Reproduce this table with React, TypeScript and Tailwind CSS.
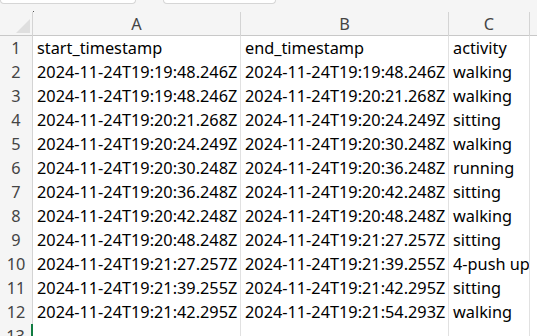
const rows: [string, string, string][] = [
  ['start_timestamp', 'end_timestamp', 'activity'],
  ['2024-11-24T19:19:48.246Z', '2024-11-24T19:19:48.246Z', 'walking'],
  ['2024-11-24T19:19:48.246Z', '2024-11-24T19:20:21.268Z', 'walking'],
  ['2024-11-24T19:20:21.268Z', '2024-11-24T19:20:24.249Z', 'sitting'],
  ['2024-11-24T19:20:24.249Z', '2024-11-24T19:20:30.248Z', 'walking'],
  ['2024-11-24T19:20:30.248Z', '2024-11-24T19:20:36.248Z', 'running'],
  ['2024-11-24T19:20:36.248Z', '2024-11-24T19:20:42.248Z', 'sitting'],
  ['2024-11-24T19:20:42.248Z', '2024-11-24T19:20:48.248Z', 'walking'],
  ['2024-11-24T19:20:48.248Z', '2024-11-24T19:21:27.257Z', 'sitting'],
  ['2024-11-24T19:21:27.257Z', '2024-11-24T19:21:39.255Z', '4-push up'],
  ['2024-11-24T19:21:39.255Z', '2024-11-24T19:21:42.295Z', 'sitting'],
  ['2024-11-24T19:21:42.295Z', '2024-11-24T19:21:54.293Z', 'walking'],
]

const cols = 'grid grid-cols-[33px_208px_208px_81px_1fr]'

export default function App() {
  return (
    <div className="w-[537px] h-[336px] overflow-hidden bg-[#f5f5f5] font-['Noto_Sans',sans-serif] text-black">
      {/* toolbar remnants */}
      <div className="h-[12px] flex items-start gap-[27px] relative">
        <div className="w-[136px] h-[4px] bg-white border-x border-b border-[#d6d6d6] rounded-b-[4px]" />
        <div className="w-[113px] h-[4px] bg-white border-x border-b border-[#d6d6d6] rounded-b-[4px]" />
        <div className="absolute left-[33px] top-[11px] w-px h-px bg-[#555]" />
      </div>

      {/* column header */}
      <div className={`${cols} h-[24px] bg-[#f5f5f5] border-b border-[#c8c8c8] text-[#444] text-[16.3px]`}>
        <div className="relative border-r border-[#d4d4d4]">
          <svg className="absolute left-[16px] top-[7px]" width="14" height="14" viewBox="0 0 14 14">
            <polygon points="14,0 14,14 0,14" fill="#dfdfdf" />
          </svg>
        </div>
        <div className="flex items-center justify-center border-r border-[#d4d4d4]">A</div>
        <div className="flex items-center justify-center border-r border-[#d4d4d4]">B</div>
        <div className="flex items-center justify-center border-r border-[#d4d4d4]">C</div>
        <div />
      </div>

      {rows.map((r, i) => (
        <div key={i} className={`${cols} h-[24px] text-[16.3px] leading-[23px]`}>
          <div className="bg-[#f5f5f5] border-r border-b border-[#d4d4d4] text-[#444] text-center pt-[1px]">{i + 1}</div>
          {r.map((c, j) => (
            <div key={j} className="bg-white border-r border-b border-[#e1e1e1] pl-[4px] pt-[1px] whitespace-nowrap overflow-hidden">
              {c}
            </div>
          ))}
          <div className="bg-white border-b border-[#e1e1e1]" />
        </div>
      ))}

      <div className={`${cols} h-[24px] text-[16.3px] leading-[23px]`}>
        <div className="bg-[#f5f5f5] border-r-2 border-[#107c41] text-[#444] text-center pt-[1px]">13</div>
        <div className="bg-white border-r border-[#e1e1e1]" />
        <div className="bg-white border-r border-[#e1e1e1]" />
        <div className="bg-white border-r border-[#e1e1e1]" />
        <div className="bg-white" />
      </div>
    </div>
  )
}
